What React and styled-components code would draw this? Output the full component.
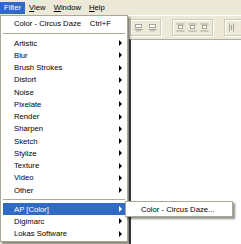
import styled, { createGlobalStyle } from 'styled-components';

const GlobalStyle = createGlobalStyle`
  html, body {
    margin: 0;
    padding: 0;
    background: #ece9d8;
  }
  body {
    font-family: "Liberation Sans", Arial, sans-serif;
    font-size: 7.7px;
    color: #000;
  }
`;

const Window = styled.div`
  position: relative;
  width: 241px;
  height: 244px;
  overflow: hidden;
  background: #ece9d8;
  display: flex;
  flex-direction: column;
`;

// Menu bar
const MenuBar = styled.div`
  height: 15px;
  display: flex;
  align-items: flex-start;
  padding-top: 2px;
  box-sizing: border-box;
`;

const BarItem = styled.div`
  height: 12px;
  line-height: 12px;
  padding: 0 4px;
  background: ${(p) => (p.$active ? '#316ac5' : 'transparent')};
  color: ${(p) => (p.$active ? '#fff' : '#000')};
  u {
    text-decoration: underline;
    text-underline-offset: 1px;
  }
`;

// Toolbar
const Toolbar = styled.div`
  height: 24px;
  border-top: 1px solid #fff;
  display: flex;
  align-items: center;
  gap: 11px;
  padding-left: 130px;
  box-sizing: border-box;
`;

const ToolGroup = styled.div`
  height: 15px;
  display: flex;
  align-items: center;
  gap: ${(p) => p.$gap || 4}px;
  padding: 0 3px;
  border: 1px solid #cfcbb8;
  box-shadow: inset 1px 1px 0 #fff, 1px 1px 0 #fff;
  background: #ece9d8;
`;

const ToolIcon = styled.svg`
  width: 9px;
  height: 9px;
  display: block;
`;

// Workspace
const Workspace = styled.div`
  flex: 1;
  display: flex;
`;

const SidePanel = styled.div`
  width: 129px;
  background: #ece9d8;
`;

const Canvas = styled.div`
  flex: 1;
  background: #fff;
  border-left: 2px solid #404040;
  border-top: 1px solid #b0ad9c;
`;

// Drop-down menus
const Menu = styled.div`
  position: absolute;
  top: ${(p) => p.$top}px;
  left: ${(p) => p.$left}px;
  width: ${(p) => p.$width}px;
  box-sizing: border-box;
  background: #fff;
  border: 1px solid #aca899;
  padding: 1px 2px;
  box-shadow: 2px 2px 2px rgba(0, 0, 0, 0.45);
`;

const Item = styled.div`
  height: 12.25px;
  display: flex;
  align-items: center;
  padding: 0 3px 0 ${(p) => p.$indent || 11}px;
  background: ${(p) => (p.$active ? '#316ac5' : 'transparent')};
  color: ${(p) => (p.$active ? '#fff' : '#000')};
  white-space: nowrap;
`;

const Label = styled.span`
  flex: 1;
`;

const Shortcut = styled.span`
  margin-right: 11px;
`;

const Arrow = styled.span`
  width: 0;
  height: 0;
  border-left: 3px solid ${(p) => (p.$active ? '#fff' : '#000')};
  border-top: 3px solid transparent;
  border-bottom: 3px solid transparent;
`;

const Separator = styled.div`
  height: ${(p) => p.$h}px;
  display: flex;
  align-items: center;
  &::after {
    content: '';
    flex: 1;
    height: 1px;
    background: #aca899;
  }
`;

function AlignIcon({ variant }) {
  return (
    <ToolIcon viewBox="0 0 9 9">
      {variant === 'a' && (
        <>
          <rect x="1.5" y="1.5" width="6" height="3" fill="#fff" stroke="#a7a497" strokeWidth="1" />
          <rect x="0.5" y="6" width="8" height="1" fill="#a7a497" />
          <rect x="2" y="7" width="5" height="1.5" fill="#c9c6b6" />
        </>
      )}
      {variant === 'b' && (
        <>
          <rect x="0.5" y="0.5" width="8" height="1" fill="#a7a497" />
          <rect x="2.5" y="2.5" width="4" height="3" fill="#fff" stroke="#a7a497" strokeWidth="1" />
          <rect x="0.5" y="7.5" width="8" height="1" fill="#a7a497" />
        </>
      )}
      {variant === 'c' && (
        <>
          <rect x="1" y="0.5" width="1" height="8" fill="#a7a497" />
          <rect x="3" y="2" width="1" height="5" fill="#a7a497" />
          <rect x="5" y="0.5" width="1" height="8" fill="#a7a497" />
        </>
      )}
    </ToolIcon>
  );
}

const effects = [
  'Artistic', 'Blur', 'Brush Strokes', 'Distort', 'Noise', 'Pixelate', 'Render',
  'Sharpen', 'Sketch', 'Stylize', 'Texture', 'Video', 'Other',
];

const plugins = [
  { name: 'AP [Color]', active: true },
  { name: 'Digimarc' },
  { name: 'Lokas Software' },
];

export default function App() {
  return (
    <Window>
      <GlobalStyle />
      <MenuBar>
        <BarItem $active>Filter</BarItem>
        <BarItem><u>V</u>iew</BarItem>
        <BarItem><u>W</u>indow</BarItem>
        <BarItem><u>H</u>elp</BarItem>
      </MenuBar>

      <Toolbar>
        <ToolGroup $gap={5}>
          <AlignIcon variant="a" />
          <AlignIcon variant="a" />
        </ToolGroup>
        <ToolGroup $gap={3}>
          <AlignIcon variant="b" />
          <AlignIcon variant="b" />
          <AlignIcon variant="b" />
        </ToolGroup>
        <ToolGroup $gap={3}>
          <AlignIcon variant="c" />
          <AlignIcon variant="c" />
        </ToolGroup>
      </Toolbar>

      <Workspace>
        <SidePanel />
        <Canvas />
      </Workspace>

      <Menu $top={15} $left={0} $width={128}>
        <Item>
          <Label>Color - Circus Daze</Label>
          <Shortcut>Ctrl+F</Shortcut>
        </Item>
        <Separator $h={7.75} />
        {effects.map((name) => (
          <Item key={name}>
            <Label>{name}</Label>
            <Arrow />
          </Item>
        ))}
        <Separator $h={6.8} />
        {plugins.map((p) => (
          <Item key={p.name} $active={p.active}>
            <Label>{p.name}</Label>
            <Arrow $active={p.active} />
          </Item>
        ))}
      </Menu>

      <Menu $top={201} $left={125} $width={108}>
        <Item $indent={13}>
          <Label>Color - Circus Daze...</Label>
        </Item>
      </Menu>
    </Window>
  );
}
